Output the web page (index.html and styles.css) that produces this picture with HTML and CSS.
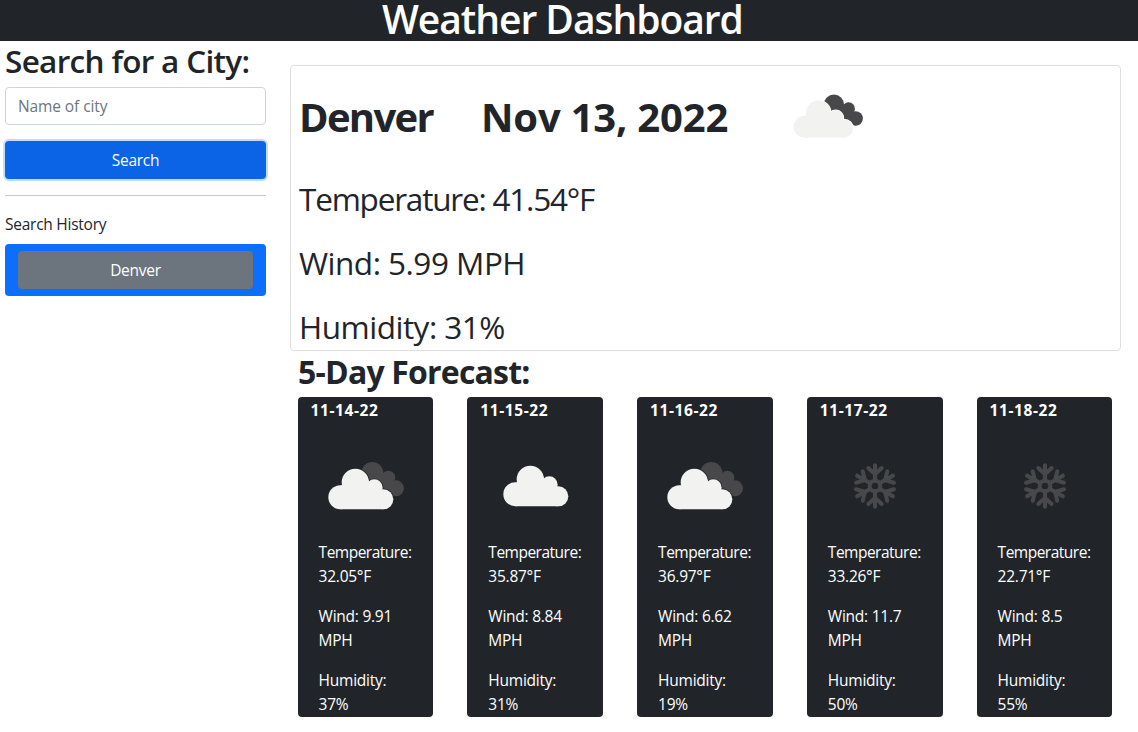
FILE: index.html
```html
<!DOCTYPE html>
<html lang="en">
<head>
<meta charset="utf-8">
<title>Weather Dashboard</title>
<link rel="stylesheet" href="styles.css">
</head>
<body>
<svg class="defs" width="0" height="0" aria-hidden="true">
  <defs>
    <g id="cloud">
      <circle cx="61" cy="127" r="36"/><circle cx="106" cy="82" r="41"/><circle cx="163" cy="98" r="25"/><circle cx="190" cy="133" r="30"/>
      <path d="M61 163V92L106 82L163 98L190 110V163Z"/>
    </g>
    <mask id="gap" maskUnits="userSpaceOnUse" x="0" y="0" width="270" height="186">
      <rect width="270" height="186" fill="#fff"/>
      <use href="#cloud" fill="#000" stroke="#000" stroke-width="5"/>
    </mask>
    <symbol id="broken-clouds" viewBox="0 0 270 186">
      <g fill="#48484a" mask="url(#gap)">
        <circle cx="157" cy="54" r="33"/><circle cx="205" cy="68" r="21"/><circle cx="228" cy="100" r="24"/>
        <path d="M130 60L205 56L228 90L215 120L150 110Z"/>
      </g>
      <use href="#cloud" fill="#f2f2f0"/>
    </symbol>
    <symbol id="overcast" viewBox="0 0 270 186"><use href="#cloud" fill="#f2f2f0"/></symbol>
    <g id="arm"><path d="M0 -16V-62M-20 -54L0 -35L20 -54"/></g>
    <symbol id="snow" viewBox="-135 -93 270 186">
      <g fill="none" stroke="#48484a" stroke-width="12" stroke-linecap="round">
        <circle r="16"/>
        <use href="#arm"/><use href="#arm" transform="rotate(60)"/><use href="#arm" transform="rotate(120)"/>
        <use href="#arm" transform="rotate(180)"/><use href="#arm" transform="rotate(240)"/><use href="#arm" transform="rotate(300)"/>
      </g>
    </symbol>
  </defs>
</svg>
<header class="header"><h1 class="brand">Weather Dashboard</h1></header>
<main class="layout">
  <aside class="sidebar">
    <h2 class="search-title">Search for a City:</h2>
    <input class="city-input" type="text" placeholder="Name of city">
    <button class="search-btn">Search</button>
    <hr class="rule">
    <p class="history-title">Search History</p>
    <div class="history"><button class="history-btn">Denver</button></div>
  </aside>
  <section class="content">
    <article class="current">
      <div class="current-head">
        <h2 class="city">Denver</h2><h2 class="date">Nov 13, 2022</h2>
        <svg class="current-icon"><use href="#broken-clouds"/></svg>
      </div>
      <p class="stat stat-temp">Temperature: 41.54°F</p>
      <p class="stat">Wind: 5.99 MPH</p>
      <p class="stat">Humidity: 31%</p>
    </article>
    <h2 class="forecast-title">5-Day Forecast:</h2>
    <div class="forecast">
      <article class="day"><h3 class="day-date">11-14-22</h3><svg class="day-icon"><use href="#broken-clouds"/></svg><p class="line"><span class="label">Temperature:</span><br>32.05°F</p><p class="line">Wind: 9.91<br>MPH</p><p class="line">Humidity:<br>37%</p></article>
      <article class="day"><h3 class="day-date">11-15-22</h3><svg class="day-icon overcast"><use href="#overcast"/></svg><p class="line"><span class="label">Temperature:</span><br>35.87°F</p><p class="line">Wind: 8.84<br>MPH</p><p class="line">Humidity:<br>31%</p></article>
      <article class="day"><h3 class="day-date">11-16-22</h3><svg class="day-icon"><use href="#broken-clouds"/></svg><p class="line"><span class="label">Temperature:</span><br>36.97°F</p><p class="line">Wind: 6.62<br>MPH</p><p class="line">Humidity:<br>19%</p></article>
      <article class="day"><h3 class="day-date">11-17-22</h3><svg class="day-icon snow"><use href="#snow"/></svg><p class="line"><span class="label">Temperature:</span><br>33.26°F</p><p class="line">Wind: 11.7<br>MPH</p><p class="line">Humidity:<br>50%</p></article>
      <article class="day"><h3 class="day-date">11-18-22</h3><svg class="day-icon snow"><use href="#snow"/></svg><p class="line"><span class="label">Temperature:</span><br>22.71°F</p><p class="line">Wind: 8.5<br>MPH</p><p class="line">Humidity:<br>55%</p></article>
    </div>
  </section>
</main>
</body>
</html>
```
FILE: styles.css
```css
* { box-sizing: border-box; }
body { margin: 0; background: #fff; color: #212529; font: 15.5px/24px "Open Sans", "Noto Sans", sans-serif; letter-spacing: -0.25px; }
h1, h2, h3, p { margin: 0; white-space: nowrap; }
.defs { position: absolute; }
.header { height: 41px; background: #212529; display: flex; padding-left: 382px; }
.brand { color: #fff; font-size: 39px; font-weight: 600; line-height: 37px; letter-spacing: -1.03px; }
.layout { display: flex; }
.sidebar { width: 261px; margin-left: 5px; padding-top: 1px; }
.search-title { font-size: 31.5px; font-weight: 600; line-height: 38px; margin-bottom: 7px; letter-spacing: -0.68px; }
.city-input, .search-btn, .history-btn { display: block; width: 100%; height: 38px; border-radius: 4px; font: inherit; letter-spacing: inherit; }
.city-input { border: 1px solid #ced4da; padding: 0 12px; background: #fff; letter-spacing: -0.1px; }
.city-input::placeholder { color: #6c757d; opacity: 1; }
.search-btn { margin-top: 16px; border: 0; background: #0b63e5; color: #fff; box-shadow: 0 0 0 2px #c2dbfe; }
.rule { margin: 16px 0; border: 0; height: 1px; background: #c8c9ca; }
.history-title { margin-bottom: 8px; }
.history { height: 52px; padding: 7px 13px; border-radius: 4px; background: #0d6efd; }
.history-btn { border: 0; background: #6c757d; color: #fff; }
.content { margin-left: 24px; width: 831px; padding-top: 24px; }
.current { height: 286px; border: 1px solid #dfdfdf; border-radius: 4px; padding: 22px 8px 0; }
.current-head { display: flex; height: 87px; line-height: 58px; }
.city, .date { font-size: 40px; font-weight: 700; }
.city { width: 182px; letter-spacing: -1.7px; }
.date { width: 304.5px; letter-spacing: -0.2px; }
.current-icon { width: 82.4px; height: 56.8px; }
.stat { font-size: 31.5px; font-weight: 400; line-height: 48px; margin-bottom: 16px; letter-spacing: -0.5px; }
.stat-temp { letter-spacing: -1.2px; }
.forecast-title { font-size: 32px; font-weight: 700; line-height: 38px; margin: 2px 0 6px 8px; letter-spacing: -0.8px; }
.forecast { display: grid; grid-template-columns: repeat(5, 135.75px); column-gap: 34px; margin-left: 7.6px; }
.day { height: 320px; border-radius: 4px; background: #212529; color: #fff; padding: 1px 0 0 21px; }
.day-date { margin-left: -8px; font-size: 15.5px; font-weight: 700; line-height: 24px; letter-spacing: 0.6px; }
.day-icon { display: block; width: 90px; height: 62px; margin: 33px 0 23px 1.4px; }
.day-icon.overcast { margin: 29.5px 0 26.5px 6.4px; }
.day-icon.snow { margin: 32.5px 0 23.5px 2px; }
.line { margin-bottom: 16px; }
.label { letter-spacing: -0.5px; }
```
